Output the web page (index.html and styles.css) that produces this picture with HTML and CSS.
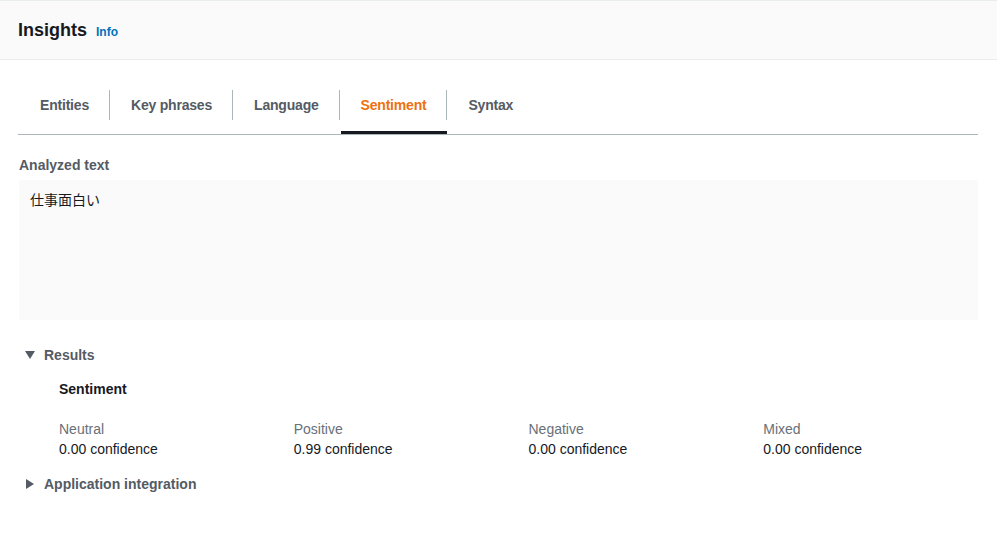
FILE: index.html
```html
<!DOCTYPE html>
<html lang="en">
<head>
<meta charset="utf-8">
<title>Insights</title>
<link rel="stylesheet" href="styles.css">
</head>
<body>
<header class="header">
  <h2 class="title">Insights</h2>
  <a class="info" href="#">Info</a>
</header>
<main class="content">
  <div class="tabs">
    <button class="tab"><span class="tab-label first">Entities</span></button>
    <button class="tab"><span class="tab-label">Key phrases</span></button>
    <button class="tab"><span class="tab-label">Language</span></button>
    <button class="tab active"><span class="tab-label">Sentiment</span></button>
    <button class="tab"><span class="tab-label">Syntax</span></button>
  </div>
  <div class="analyzed">
    <div class="field-label">Analyzed text</div>
    <div class="text-box">仕事面白い</div>
  </div>
  <section class="expander">
    <div class="exp-head">
      <svg class="caret" width="10" height="10" viewBox="0 0 10 10"><polygon points="0,1 10,1 5,9" fill="#545b64"/></svg>
      <span>Results</span>
    </div>
    <div class="exp-body">
      <div class="sub-title">Sentiment</div>
      <div class="grid">
        <div class="cell"><div class="k">Neutral</div><div class="v">0.00 confidence</div></div>
        <div class="cell"><div class="k">Positive</div><div class="v">0.99 confidence</div></div>
        <div class="cell"><div class="k">Negative</div><div class="v">0.00 confidence</div></div>
        <div class="cell"><div class="k">Mixed</div><div class="v">0.00 confidence</div></div>
      </div>
    </div>
  </section>
  <section class="expander">
    <div class="exp-head">
      <svg class="caret" width="10" height="10" viewBox="0 0 10 10"><polygon points="1,0 9,5 1,10" fill="#545b64"/></svg>
      <span>Application integration</span>
    </div>
  </section>
</main>
</body>
</html>
```
FILE: styles.css
```css
html, body {
  margin: 0;
  padding: 0;
  background: #ffffff;
  font-family: "Liberation Sans", Arial, "Noto Sans CJK JP", sans-serif;
  font-size: 14px;
  line-height: 20px;
  color: #16191f;
}

.header {
  display: flex;
  align-items: baseline;
  gap: 9px;
  height: 58px;
  padding: 0 18px;
  box-sizing: content-box;
  background: #fafafa;
  border-top: 1px solid #eaeded;
  border-bottom: 1px solid #eaeded;
}

.title {
  margin: 0;
  padding-top: 17px;
  font-size: 18px;
  line-height: 24px;
  font-weight: 700;
  color: #16191f;
}

.info {
  font-size: 12px;
  font-weight: 700;
  color: #0073bb;
  text-decoration: none;
}

.content {
  padding: 24px 19px 0 18px;
}

.tabs {
  display: flex;
  border-bottom: 1px solid #aab7b8;
}

.tab {
  position: relative;
  padding: 6px 0 14px;
  margin: 0;
  border: 0;
  background: none;
  font: inherit;
  font-weight: 700;
  letter-spacing: -0.2px;
  color: #545b64;
  cursor: pointer;
}

.tab-label {
  display: block;
  padding: 0 20px 0 21px;
  line-height: 30px;
  border-left: 1px solid #aab7b8;
}

.tab-label.first {
  border-left-color: transparent;
}

.tab.active {
  color: #ec7211;
}

.tab.active::after {
  content: "";
  position: absolute;
  left: 2px;
  right: -1px;
  bottom: 0;
  height: 3px;
  background: #16191f;
}

.analyzed {
  padding: 20px 0 0 1px;
}

.field-label {
  font-weight: 700;
  color: #545b64;
  line-height: 20px;
  padding-bottom: 5px;
}

.text-box {
  height: 140px;
  box-sizing: border-box;
  padding: 9px 11px;
  background: #fafafa;
  font-family: "Noto Sans CJK JP", sans-serif;
  color: #16191f;
}

.expander {
  padding-top: 25px;
}

.expander + .expander {
  padding-top: 15px;
}

.exp-head {
  display: flex;
  align-items: center;
  gap: 9px;
  padding-left: 7px;
  font-weight: 700;
  color: #545b64;
}

.exp-body {
  padding: 14px 0 0 41px;
}

.sub-title {
  font-weight: 700;
  color: #16191f;
  padding-bottom: 20px;
}

.grid {
  display: grid;
  grid-template-columns: repeat(4, 1fr);
  column-gap: 20px;
}

.k {
  color: #687078;
}

.v {
  color: #16191f;
}
```
